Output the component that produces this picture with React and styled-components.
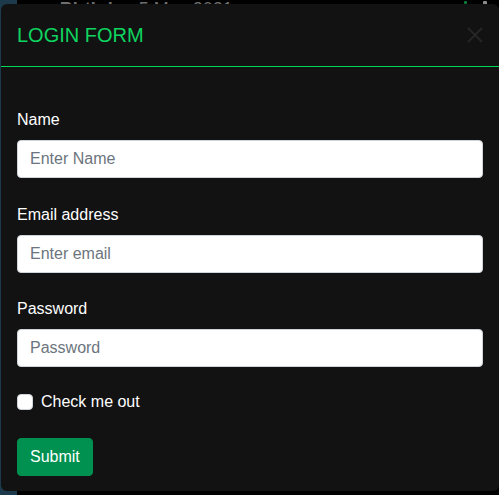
import React from 'react'
import styled, { createGlobalStyle } from 'styled-components'

const GlobalStyle = createGlobalStyle`
  * { box-sizing: border-box; }
  body {
    margin: 0;
    background: #000;
    font-family: 'Liberation Sans', Arial, sans-serif;
  }
`

const Page = styled.div`
  position: relative;
  height: 495px;
  overflow: hidden;
  display: flex;
  background: #000;
`

const SideStrip = styled.div`
  width: 17px;
  flex: none;
  background: #1c3a4b;
`

const Behind = styled.div`
  flex: 1;
  display: flex;
  align-items: flex-start;
  padding: 0 12px 0 28px;
  font-size: 18px;
  line-height: 1;
  color: #6f6f6f;
`

const Chevron = styled.span`
  color: #0a6b35;
  font-size: 14px;
  margin-right: 10px;
`

const Bold = styled.span`
  font-weight: bold;
  margin-right: 6px;
`

const Spacer = styled.span`
  flex: 1;
`

const Dot = styled.span`
  width: ${p => p.$size}px;
  height: ${p => p.$size}px;
  margin: 1px 0 0 ${p => p.$gap}px;
  background: ${p => p.$color};
  border-radius: 1px;
`

const Modal = styled.div`
  position: absolute;
  top: 4px;
  left: 1px;
  width: 498px;
  height: 487px;
  background: #121212;
  border-radius: 6px;
  display: flex;
  flex-direction: column;
`

const Header = styled.div`
  display: flex;
  align-items: center;
  justify-content: space-between;
  padding: 16px;
  border-bottom: 1px solid #00d757;
`

const Title = styled.h5`
  margin: 0;
  font-size: 20px;
  font-weight: normal;
  line-height: 30px;
  color: #0fd460;
`

const CloseBtn = styled.button`
  width: 16px;
  height: 16px;
  padding: 0;
  border: 0;
  background: transparent;
  display: grid;
  place-items: center;
  cursor: pointer;
`

const Body = styled.form`
  padding: 41px 16px 16px;
  display: flex;
  flex-direction: column;
`

const Group = styled.div`
  display: flex;
  flex-direction: column;
  margin-bottom: 24.5px;
`

const Label = styled.label`
  font-size: 16px;
  line-height: 24px;
  color: #fff;
  margin-bottom: 8px;
`

const Input = styled.input`
  height: 38px;
  padding: 6px 12px;
  font-family: inherit;
  font-size: 16px;
  border: 1px solid #ced4da;
  border-radius: 4px;
  background: #fff;
  color: #212529;
  &::placeholder { color: #6c757d; }
`

const CheckRow = styled.label`
  display: flex;
  align-items: center;
  gap: 8px;
  font-size: 16px;
  line-height: 24px;
  color: #fff;
  margin: -2px 0 24.5px;
`

const Box = styled.input`
  appearance: none;
  width: 16px;
  height: 16px;
  margin: 0;
  background: #fff;
  border: 1px solid #ced4da;
  border-radius: 4px;
`

const SubmitBtn = styled.button`
  align-self: flex-start;
  height: 38px;
  padding: 6px 12px;
  font-family: inherit;
  font-size: 16px;
  color: #fff;
  background: #009150;
  border: 1px solid #009150;
  border-radius: 4px;
`

const fields = [
  { label: 'Name', type: 'text', placeholder: 'Enter Name' },
  { label: 'Email address', type: 'email', placeholder: 'Enter email' },
  { label: 'Password', type: 'password', placeholder: 'Password' },
]

function App () {
  return (
    <>
      <GlobalStyle />
      <Page>
        <SideStrip />
        <Behind>
          <Chevron>›</Chevron>
          <Bold>Birthday</Bold>
          <span>5 May 2021</span>
          <Spacer />
          <Dot $size={3} $gap={0} $color='#0b7a3c' />
          <Dot $size={4} $gap={16} $color='#8a8a8a' />
        </Behind>
        <Modal>
          <Header>
            <Title>LOGIN FORM</Title>
            <CloseBtn type='button' aria-label='Close'>
              <svg width='16' height='16' viewBox='0 0 16 16'>
                <path d='M1 1L15 15M15 1L1 15' stroke='#262626' strokeWidth='2' />
              </svg>
            </CloseBtn>
          </Header>
          <Body onSubmit={e => e.preventDefault()}>
            {fields.map(f => (
              <Group key={f.label}>
                <Label>{f.label}</Label>
                <Input type={f.type} placeholder={f.placeholder} />
              </Group>
            ))}
            <CheckRow>
              <Box type='checkbox' />
              Check me out
            </CheckRow>
            <SubmitBtn type='submit'>Submit</SubmitBtn>
          </Body>
        </Modal>
      </Page>
    </>
  )
}

export default App
